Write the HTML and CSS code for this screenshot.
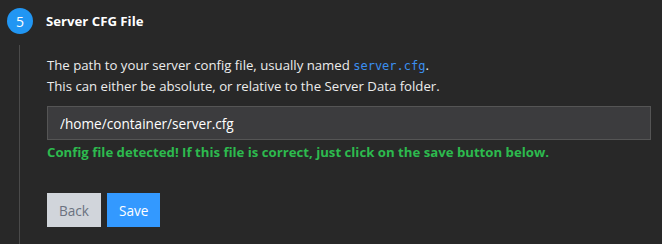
FILE: index.html
```html
<!DOCTYPE html>
<html>
<head>
  <title>Server CFG File</title>
  <link rel="stylesheet" href="styles.css">
</head>
<body>
  <div class="step">
    <div class="step-header">
      <span class="step-num">5</span>
      <span class="step-title">Server CFG File</span>
    </div>
    <div class="step-body">
      <p class="hint">
        The path to your server config file, usually named <code>server.cfg</code>.<br>
        This can either be absolute, or relative to the Server Data folder.
      </p>
      <input type="text" class="path-input" value="/home/container/server.cfg">
      <p class="status-ok">Config file detected! If this file is correct, just click on the save button below.</p>
      <div class="actions">
        <button class="btn btn-back">Back</button>
        <button class="btn btn-save">Save</button>
      </div>
    </div>
  </div>
</body>
</html>
```
FILE: styles.css
```css
body {
  margin: 0;
  background-color: #282828;
  font-family: "Open Sans", "Noto Sans", sans-serif;
  font-size: 13.2px;
  color: #ececec;
}

.step {
  padding: 8px 11px 0 7px;
}

.step-header {
  display: flex;
  align-items: center;
  height: 26px;
}

.step-num {
  width: 26px;
  height: 26px;
  border-radius: 50%;
  background-color: #2196f3;
  color: #fff;
  display: flex;
  justify-content: center;
  align-items: center;
  font-size: 14px;
}

.step-title {
  margin-left: 13px;
  font-weight: bold;
  color: #fff;
}

.step-body {
  margin: 11px 0 0 12px;
  padding: 10px 0 17px 27px;
  border-left: 1px solid #4a4a4a;
}

.hint {
  margin: 0 0 10px;
  line-height: 20px;
}

.hint code {
  font-family: "DejaVu Sans Mono", monospace;
  font-size: 12px;
  color: #3b8ff0;
}

.path-input {
  display: block;
  box-sizing: border-box;
  width: 100%;
  height: 34px;
  padding: 0 12px;
  background-color: #3c3c3e;
  border: 1px solid #555;
  color: #fff;
  font-family: inherit;
  font-size: 13.6px;
  outline: none;
}

.status-ok {
  margin: 3px 0 0;
  font-weight: bold;
  color: #2dba4e;
}

.actions {
  display: flex;
  gap: 6px;
  margin-top: 32px;
}

.btn {
  height: 34px;
  padding: 0 12px;
  border: none;
  font-family: inherit;
  font-size: 13.6px;
  cursor: pointer;
}

.btn-back {
  background-color: #d1d5db;
  color: #6b7280;
}

.btn-save {
  background-color: #3399ff;
  color: #fff;
}
```
